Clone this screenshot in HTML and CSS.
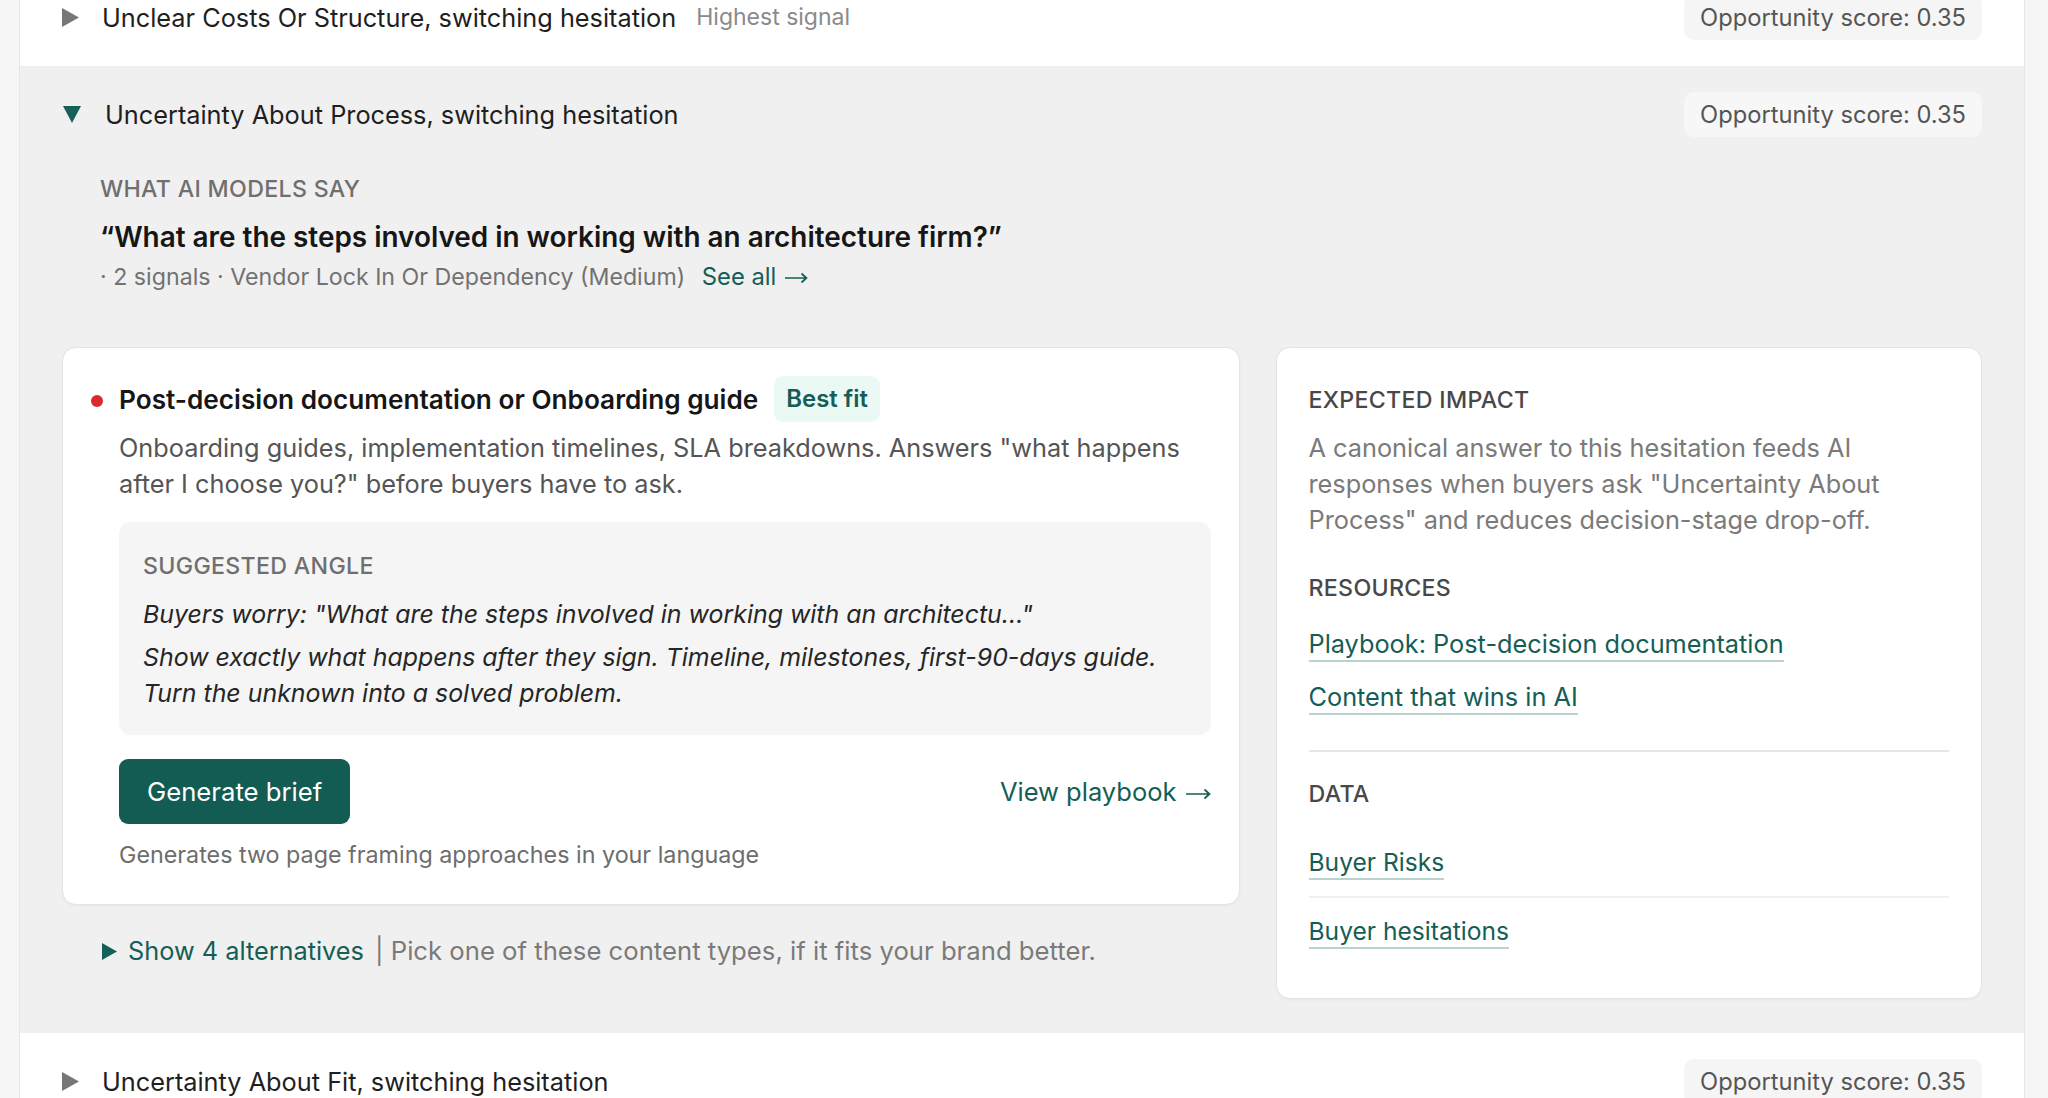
FILE: index.html
```html
<!DOCTYPE html>
<html lang="en">
<head>
    <meta charset="UTF-8">
    <meta name="viewport" content="width=device-width, initial-scale=1.0">
    <title>Buyer hesitations</title>
    <link rel="stylesheet" href="styles.css">
</head>
<body>
    <div class="list">
        <div class="row">
            <div class="row-head">
                <span class="caret"><svg width="17" height="19" viewBox="0 0 17 19"><polygon points="0,0 17,9.5 0,19" fill="#777"/></svg></span>
                <span class="row-title">Unclear Costs Or Structure, switching hesitation</span>
                <span class="row-note">Highest signal</span>
                <span class="score">Opportunity score: 0.35</span>
            </div>
        </div>

        <div class="row open">
            <div class="row-head">
                <span class="caret"><svg width="18" height="17" viewBox="0 0 18 17"><polygon points="0,0 18,0 9,17" fill="#16605a"/></svg></span>
                <span class="row-title">Uncertainty About Process, switching hesitation</span>
                <span class="score">Opportunity score: 0.35</span>
            </div>

            <div class="row-body">
                <div class="models">
                    <div class="label">What AI models say</div>
                    <p class="quote">“What are the steps involved in working with an architecture firm?”</p>
                    <p class="meta">· 2 signals · Vendor Lock In Or Dependency (Medium) <a href="#" class="link">See all<svg class="arr" width="24" height="12" viewBox="0 0 24 12" aria-hidden="true"><path d="M1 6H22.5M17.5 1.5L22.5 6L17.5 10.5" fill="none" stroke="currentColor" stroke-width="1.7"/></svg></a></p>
                </div>

                <div class="split">
                    <div class="pick-col">
                        <div class="card pick">
                            <span class="dot"></span>
                            <div class="pick-main">
                                <div class="pick-head">
                                    <h3>Post-decision documentation or Onboarding guide</h3>
                                    <span class="fit">Best fit</span>
                                </div>
                                <p class="pick-desc">Onboarding guides, implementation timelines, SLA breakdowns. Answers "what happens after I choose you?" before buyers have to ask.</p>

                                <div class="angle">
                                    <div class="label">Suggested angle</div>
                                    <p>Buyers worry: "What are the steps involved in working with an architectu..."</p>
                                    <p>Show exactly what happens after they sign. Timeline, milestones, first-90-days guide. Turn the unknown into a solved problem.</p>
                                </div>

                                <div class="actions">
                                    <button class="btn">Generate brief</button>
                                    <a href="#" class="link">View playbook<svg class="arr" width="26" height="12" viewBox="0 0 26 12" aria-hidden="true"><path d="M1 6H24.5M19.5 1.5L24.5 6L19.5 10.5" fill="none" stroke="currentColor" stroke-width="1.7"/></svg></a>
                                </div>
                                <p class="hint">Generates two page framing approaches in your language</p>
                            </div>
                        </div>

                        <div class="alts">
                            <svg width="15" height="17" viewBox="0 0 15 17"><polygon points="0,0 15,8.5 0,17" fill="#16605a"/></svg>
                            <a href="#" class="link">Show 4 alternatives</a>
                            <span class="alts-note">| Pick one of these content types, if it fits your brand better.</span>
                        </div>
                    </div>

                    <div class="card side">
                        <div class="label dark">Expected impact</div>
                        <p class="impact">A canonical answer to this hesitation feeds AI responses when buyers ask "Uncertainty About Process" and reduces decision-stage drop-off.</p>

                        <div class="label dark">Resources</div>
                        <ul class="resources">
                            <li><a href="#" class="under">Playbook: Post-decision documentation</a></li>
                            <li><a href="#" class="under">Content that wins in AI</a></li>
                        </ul>

                        <div class="side-data">
                            <div class="label dark">Data</div>
                            <ul class="data-list">
                                <li><a href="#" class="under">Buyer Risks</a></li>
                                <li><a href="#" class="under">Buyer hesitations</a></li>
                            </ul>
                        </div>
                    </div>
                </div>
            </div>
        </div>

        <div class="row">
            <div class="row-head">
                <span class="caret"><svg width="17" height="19" viewBox="0 0 17 19"><polygon points="0,0 17,9.5 0,19" fill="#777"/></svg></span>
                <span class="row-title">Uncertainty About Fit, switching hesitation</span>
                <span class="score">Opportunity score: 0.35</span>
            </div>
        </div>
    </div>
</body>
</html>
```

FILE: styles.css
```css
body {
    margin: 0;
    background-color: #f6f6f6;
    font-family: Inter, "Noto Sans", sans-serif;
    font-size: 25.3px;
    color: #1c1c1c;
    overflow: hidden;
}

p {
    margin: 0;
}

a {
    text-decoration: none;
}

.list {
    margin: -31px 23px 0 19px;
    background-color: #fff;
    border-left: 1px solid #e6e6e6;
    border-right: 1px solid #e6e6e6;
}

.row-head {
    display: flex;
    align-items: center;
    padding: 26px 42px;
    line-height: 45px;
}

.caret {
    width: 22px;
    display: flex;
    margin-right: 18px;
}

.row.open .caret {
    margin-left: 1px;
    margin-right: 20px;
}

.row-title {
    color: #1f1f1f;
}

.row-note {
    margin-left: 20px;
    font-size: 23px;
    color: #8a8a8a;
}

.score {
    margin-left: auto;
    padding: 0 16px;
    border-radius: 10px;
    background-color: #f5f5f5;
    color: #555;
    font-size: 23.7px;
    line-height: 45px;
}

.row.open {
    background-color: #f0f0f0;
}

.row.open .score {
    background-color: #f7f7f7;
}

.row-body {
    padding: 10px 42px 34px;
}

.models {
    padding-left: 38px;
    margin-bottom: 54px;
}

.label {
    font-size: 23.2px;
    font-weight: 500;
    letter-spacing: 0.3px;
    text-transform: uppercase;
    color: #6f6f6f;
    line-height: 32px;
}

.label.dark {
    color: #484848;
}

.quote {
    margin-top: 14px;
    font-size: 27.9px;
    font-weight: 600;
    color: #161616;
    line-height: 36px;
}

.meta {
    margin-top: 6px;
    font-size: 23.2px;
    color: #727272;
    line-height: 32px;
}

.meta .link {
    margin-left: 10px;
    font-size: 23.8px;
}

.link {
    color: #155e56;
}

/* long thin arrow after link labels */
.arr {
    margin-left: 8px;
    vertical-align: 1px;
}

.split {
    display: grid;
    grid-template-columns: 5fr 3fr;
    gap: 36px;
    align-items: start;
}

.card {
    background-color: #fff;
    border: 1px solid #e4e4e4;
    border-radius: 14px;
    box-shadow: 0 1px 3px rgba(0, 0, 0, 0.04);
}

.pick {
    display: flex;
    gap: 16px;
    padding: 28px 28px 33px;
}

.dot {
    flex: none;
    width: 12px;
    height: 12px;
    margin-top: 19px;
    border-radius: 50%;
    background-color: #d92b2b;
}

.pick-main {
    flex: 1;
}

.pick-head {
    display: flex;
    align-items: center;
    gap: 16px;
}

.pick-head h3 {
    margin: 0;
    font-size: 26.2px;
    font-weight: 600;
    color: #161616;
}

.fit {
    padding: 0 12px;
    border-radius: 9px;
    background-color: #ebf9f5;
    color: #155e56;
    font-weight: 600;
    font-size: 23.9px;
    line-height: 46px;
}

.pick-desc {
    margin-top: 8px;
    color: #555;
    line-height: 36px;
}

.angle {
    margin-top: 20px;
    padding: 28px 24px 24px;
    background-color: #f5f5f5;
    border-radius: 12px;
}

.angle .label {
    margin-bottom: 14px;
}

.angle p {
    font-size: 24.9px;
    font-style: italic;
    color: #262626;
    line-height: 36px;
}

.angle p + p {
    margin-top: 7px;
}

.actions {
    display: flex;
    align-items: center;
    justify-content: space-between;
    margin-top: 24px;
}

.actions .link {
    font-size: 25.5px;
}

.btn {
    padding: 0 28px;
    height: 65px;
    border: none;
    border-radius: 9px;
    background-color: #135c54;
    color: #fff;
    font-family: inherit;
    font-size: 25.7px;
    cursor: pointer;
}

.hint {
    margin-top: 15px;
    font-size: 23.3px;
    color: #6d6d6d;
    line-height: 32px;
}

.alts {
    display: flex;
    align-items: center;
    gap: 11px;
    padding: 28px 0 0 40px;
    line-height: 36px;
}

.alts-note {
    font-size: 25.7px;
    color: #7a7a7a;
}

.side {
    padding: 36px 32px 33px;
}

.impact {
    margin: 14px 0 34px;
    color: #7a7a7a;
    line-height: 36px;
}

.resources {
    list-style: none;
    margin: 14px 0 26px;
    padding: 0;
}

.resources li {
    padding: 11px 0 12px;
    line-height: 30px;
}

.under {
    color: #155e56;
    padding-bottom: 1px;
    border-bottom: 2px solid #b9d4cf;
}

.side-data {
    border-top: 2px solid #e6e6e6;
    padding-top: 26px;
}

.data-list {
    list-style: none;
    margin: 18px 0 0;
    padding: 0;
    font-size: 24.6px;
}

.data-list li {
    padding: 16px 0 16px;
    line-height: 36px;
}

.data-list li + li {
    padding-top: 15px;
    border-top: 2px solid #f0f0f0;
}
```
